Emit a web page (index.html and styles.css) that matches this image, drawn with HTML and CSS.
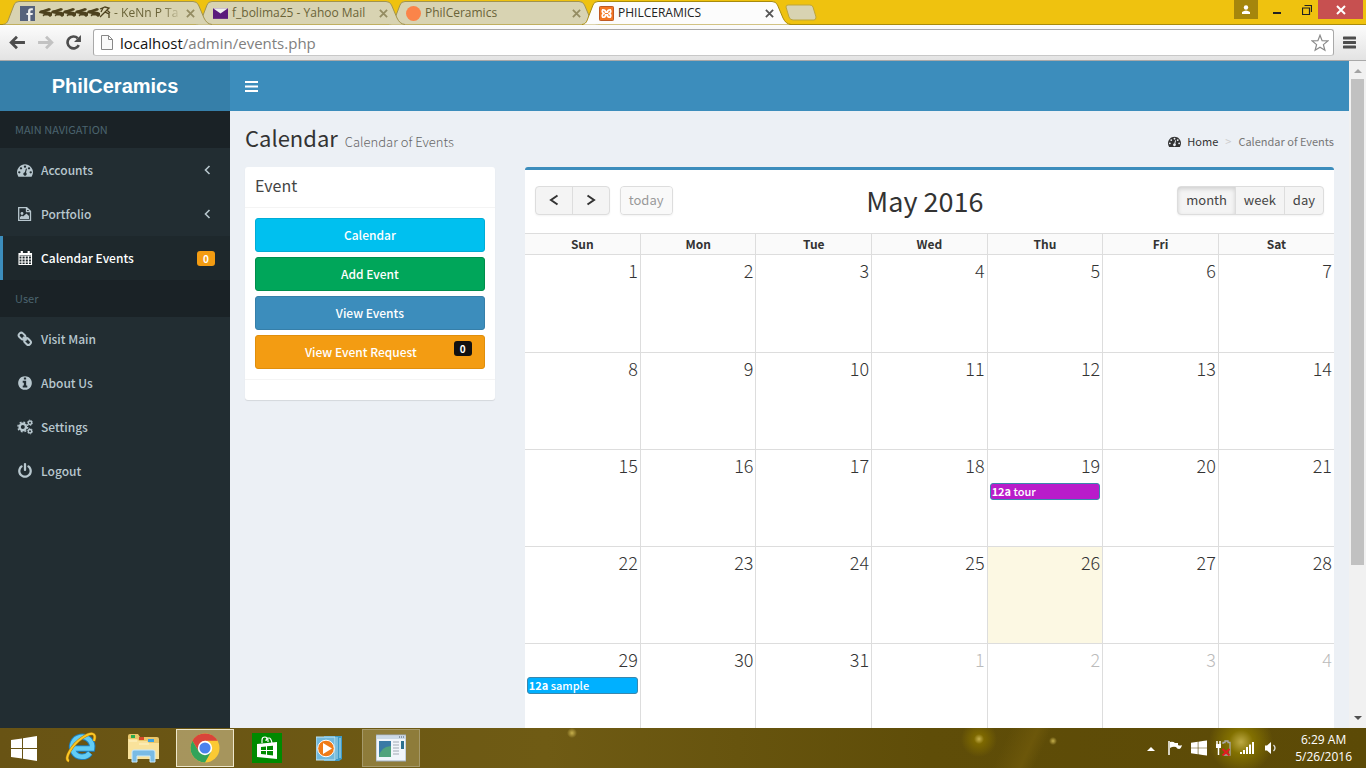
FILE: index.html
```html
<!DOCTYPE html>
<html lang="en">
<head>
<meta charset="utf-8">
<title>PHILCERAMICS</title>
<link rel="stylesheet" href="styles.css">
</head>
<body>
<svg class="defs" aria-hidden="true">
  <symbol id="tab-shape" viewBox="0 0 209 25" preserveAspectRatio="none"><path d="M0 24.5C4 24 5 21 6 18L11 5Q12 1.500 16 1.500H190Q194 1.500 195.500 5L201 18C203 22 205 24 209 24.500"/></symbol>
  <symbol id="x" viewBox="0 0 10 10"><path d="M1 1l8 8M9 1L1 9" stroke="currentColor" stroke-width="2" fill="none"/></symbol>
  <symbol id="dash" viewBox="0 0 1792 1792"><path d="M384 1152q0-53-37.500-90.500t-90.500-37.500-90.500 37.500-37.500 90.500 37.500 90.500 90.500 37.500 90.500-37.500 37.500-90.500zm192-448q0-53-37.500-90.500t-90.500-37.500-90.500 37.500-37.500 90.500 37.500 90.500 90.500 37.500 90.500-37.500 37.500-90.500zm428 481l101-382q6-26-7.500-48.500t-38.500-29.500-48 6.500-30 39.500l-101 382q-60 5-107 43.500t-63 98.500q-20 77 20 146t117 89 146-20 89-117q16-60-6-117t-72-91zm660-33q0-53-37.500-90.500t-90.500-37.500-90.500 37.500-37.500 90.500 37.500 90.500 90.500 37.500 90.500-37.500 37.500-90.500zm-640-640q0-53-37.500-90.500t-90.500-37.500-90.500 37.500-37.500 90.500 37.500 90.500 90.500 37.500 90.500-37.500 37.500-90.500zm448 192q0-53-37.500-90.500t-90.500-37.500-90.500 37.500-37.500 90.500 37.500 90.500 90.500 37.500 90.500-37.500 37.500-90.500zm320 448q0 261-141 483-19 29-54 29h-1402q-35 0-54-29-141-221-141-483 0-182 71-348t191-286 286-191 348-71 348 71 286 191 191 286 71 348z"/></symbol>
  <symbol id="left" viewBox="0 0 8 10"><path d="M6.500 1L2.500 5l4 4" stroke="currentColor" stroke-width="1.600" fill="none"/></symbol>
  <symbol id="flag4" viewBox="0 0 26 25"><path fill="#fff" d="M0 4l11-1.500V12H0zM12 2.300L26 0v12H12zM0 13h11v9.500L0 21zM12 13h14v12l-14-2.300z"/></symbol>
</svg>

<header class="tabstrip">
  <nav class="tabs" aria-label="Browser tabs">
    <div class="tab tab-1">
      <svg class="tab-bg"><use href="#tab-shape"/></svg>
      <svg class="fav" viewBox="0 0 14 14"><path fill="#56627c" d="M0 0h14v14H0z"/><path fill="#eee" d="M7.500 14V8.500H6v-2h1.500V5Q7.500 2 10.500 2H12v2h-1.200Q9.700 4 9.700 5v1.500H12l-.3 2h-2V14z"/></svg>
      <span class="tab-title fade"><svg class="arms" viewBox="0 0 72 14"><g fill="#4d411d"><path id="arm" d="M0 8Q0 5 4 5L10 3l2 1-1 1.500-4 1Q11 6 13 8v2.500l-2 1.500-2-1.500H5.500l-1 1-1-1.500L5 9z"/><use href="#arm" x="12"/><use href="#arm" x="24"/><use href="#arm" x="36"/><use href="#arm" x="48"/></g><path d="M61 4l5-2 4 1-4 4 4 2v4M66 7l-5 5M64 3l-2 4M68 5l3 3" fill="none" stroke="#4d411d" stroke-width="1.300"/></svg> - KeNn P Ta</span>
      <button class="tab-close" aria-label="Close tab"><svg><use href="#x"/></svg></button>
    </div>
    <div class="tab tab-2">
      <svg class="tab-bg"><use href="#tab-shape"/></svg>
      <svg class="fav" viewBox="0 0 14 14"><path fill="#5b1a7c" d="M0 2h14v10H0z"/><path fill="#eee" d="M0 2h14L7 7z"/></svg>
      <span class="tab-title">f_bolima25 - Yahoo Mail</span>
      <button class="tab-close" aria-label="Close tab"><svg><use href="#x"/></svg></button>
    </div>
    <div class="tab tab-3">
      <svg class="tab-bg"><use href="#tab-shape"/></svg>
      <svg class="fav" viewBox="0 0 14 14"><circle cx="7" cy="7" r="7" fill="#fb8449"/></svg>
      <span class="tab-title">PhilCeramics</span>
      <button class="tab-close" aria-label="Close tab"><svg><use href="#x"/></svg></button>
    </div>
    <div class="tab tab-4 active">
      <svg class="tab-bg"><use href="#tab-shape"/></svg>
      <svg class="fav" viewBox="0 0 16 16"><rect x=".5" y=".5" width="15" height="15" rx="1" fill="#f37623" stroke="#b9501a"/><path d="M4 4q3 0 3 2.500h2Q9 4 12 4q1.500 2.500-1 4 2.500 1.500 1 4-3 0-3-2.500H7Q7 12 4 12q-1.500-2.500 1-4-2.500-1.500-1-4z" fill="none" stroke="#fff" stroke-width="1.800"/></svg>
      <span class="tab-title">PHILCERAMICS</span>
      <button class="tab-close" aria-label="Close tab"><svg><use href="#x"/></svg></button>
    </div>
    <button class="new-tab" aria-label="New tab"><svg viewBox="0 0 32 17"><path d="M3 1h22q2 0 3 2l3 10q0 3-2 3H8q-3 0-4-3L1 3q0-2 2-2z" fill="#d8d3b2" stroke="#bca53c"/></svg></button>
  </nav>
  <div class="window-buttons">
    <button class="win user" aria-label="User"><svg viewBox="0 0 10 10"><circle cx="5" cy="2.500" r="2.200" fill="#fff"/><path fill="#fff" d="M1 9V7q4-3 8 0v2z"/></svg></button>
    <button class="win min" aria-label="Minimize"><svg viewBox="0 0 10 10"><path d="M1 8h8" stroke="#222" stroke-width="2"/></svg></button>
    <button class="win" aria-label="Restore"><svg viewBox="0 0 10 10"><path d="M.5 3h7v6.500h-7zM2.500 .5h7V7" fill="none" stroke="#222" stroke-width="1.200"/></svg></button>
    <button class="win close" aria-label="Close"><svg><use href="#x"/></svg></button>
  </div>
</header>

<div class="toolbar">
  <button class="nav" aria-label="Back"><svg viewBox="0 0 16 14"><path d="M15 7H2M7.500 1.500L2 7l5.500 5.500" fill="none" stroke="#4d4d4d" stroke-width="2.600"/></svg></button>
  <button class="nav" aria-label="Forward"><svg viewBox="0 0 16 14"><path d="M1 7h13M8.500 1.500L14 7l-5.500 5.500" fill="none" stroke="#c2c2c2" stroke-width="2.600"/></svg></button>
  <button class="nav" aria-label="Reload"><svg viewBox="0 0 16 14"><path d="M13 9.500A5.600 5.600 0 1 1 12 3" fill="none" stroke="#4d4d4d" stroke-width="2.500"/><path d="M15 0v6.500H8.500z" fill="#4d4d4d"/></svg></button>
  <div class="address">
    <svg class="doc" viewBox="0 0 12 15"><path d="M.5 .5h7l4 4v10H.5zM7.500 .5v4h4" fill="#fafafa" stroke="#888"/></svg>
    <span class="url"><b>localhost</b>/admin/events.php</span>
    <svg class="star" viewBox="0 0 18 18"><path d="M9 1.200l2.100 5.400 5.800.3-4.500 3.700 1.500 5.700L9 13.200l-4.900 3.100 1.500-5.700L1.100 6.900l5.800-.3z" fill="none" stroke="#8a8a8a" stroke-width="1.200"/></svg>
  </div>
  <button class="menu" aria-label="Menu"><svg viewBox="0 0 13 13"><path d="M1 2h11M1 6.500h11M1 11h11" stroke="#4d4d4d" stroke-width="3" stroke-linecap="round"/></svg></button>
</div>

<div class="viewport">
  <aside class="sidebar">
    <a class="brand" href="#">PhilCeramics</a>
    <h2 class="side-head">MAIN NAVIGATION</h2>
    <a class="side-item" href="#"><svg><use href="#dash"/></svg><span>Accounts</span><svg class="chev"><use href="#left"/></svg></a>
    <a class="side-item" href="#"><svg viewBox="0 0 16 16"><path d="M1.700 1.700h8l3.800 3.600v9H1.700zM9.500 1.700v4h4" fill="none" stroke="currentColor" stroke-width="1.300"/><circle cx="5" cy="7.500" r="1.400"/><path d="M3 13v-2l2-1.500 1 1 3.500-3L12 10v3z"/></svg><span>Portfolio</span><svg class="chev"><use href="#left"/></svg></a>
    <a class="side-item current" href="#"><svg viewBox="0 0 16 16"><path d="M2 3.500h12.500v11H2zM2 6h12.500M2 9h12.500M2 12h12.500M5 6v8.500M8.200 6v8.500M11.400 6v8.500M2 4.500h12.500" fill="none" stroke="currentColor" stroke-width="1.100"/><path d="M3.700 1h2.200v4H3.700zM10.600 1h2.200v4h-2.200z"/></svg><span>Calendar Events</span><small class="badge orange">0</small></a>
    <h2 class="side-head">User</h2>
    <a class="side-item" href="#"><svg viewBox="0 0 16 16"><g fill="none" stroke="currentColor" stroke-width="2"><rect x="-3.500" y="-2.500" width="7" height="5" rx="2.300" transform="translate(5 5) rotate(45)"/><rect x="-3.500" y="-2.500" width="7" height="5" rx="2.300" transform="translate(10.600 10.600) rotate(45)"/><path d="M6 6l3.500 3.500"/></g></svg><span>Visit Main</span></a>
    <a class="side-item" href="#"><svg viewBox="0 0 1792 1792"><path d="M1152 1376v-160q0-14-9-23t-23-9h-96v-512q0-14-9-23t-23-9h-320q-14 0-23 9t-9 23v160q0 14 9 23t23 9h96v320h-96q-14 0-23 9t-9 23v160q0 14 9 23t23 9h448q14 0 23-9t9-23zm-128-896v-160q0-14-9-23t-23-9h-192q-14 0-23 9t-9 23v160q0 14 9 23t23 9h192q14 0 23-9t9-23zm640 416q0 209-103 385.500t-279.500 279.500-385.500 103-385.500-103-279.500-279.500-103-385.500 103-385.500 279.500-279.500 385.500-103 385.500 103 279.500 279.500 103 385.500z"/></svg><span>About Us</span></a>
    <a class="side-item" href="#"><svg viewBox="0 0 16 16"><g fill="none" stroke="currentColor"><circle cx="5.800" cy="8" r="3.200" stroke-width="2.400"/><circle cx="5.800" cy="8" r="4.900" stroke-width="1.400" stroke-dasharray="1.900 1.950"/><circle cx="13" cy="3.800" r="1.700" stroke-width="1.500"/><circle cx="13" cy="3.800" r="2.700" stroke-width=".8" stroke-dasharray="1.400 1.400"/><circle cx="13" cy="12.200" r="1.700" stroke-width="1.500"/><circle cx="13" cy="12.200" r="2.700" stroke-width=".8" stroke-dasharray="1.400 1.400"/></g></svg><span>Settings</span></a>
    <a class="side-item" href="#"><svg viewBox="0 0 1792 1792"><path d="M1664 896q0 156-61 298t-164 245-245 164-298 61-298-61-245-164-164-245-61-298q0-182 80.500-343t226.500-270q43-32 95.500-25t83.500 50q32 42 24.500 94.500t-49.500 84.500q-98 74-151.500 181t-53.500 228q0 104 40.500 198.500t109.500 163.500 163.500 109.500 198.500 40.500 198.500-40.500 163.500-109.500 109.500-163.500 40.500-198.500q0-121-53.500-228t-151.500-181q-42-32-49.500-84.500t24.500-94.500q31-43 84-50t95 25q146 109 226.500 270t80.500 343zm-640-768v640q0 52-38 90t-90 38-90-38-38-90v-640q0-52 38-90t90-38 90 38 38 90z"/></svg><span>Logout</span></a>
  </aside>

  <main class="main">
    <div class="topbar"><button class="toggle" aria-label="Toggle navigation"><svg viewBox="0 0 13 11"><path d="M0 1h13M0 5.500h13M0 10h13" stroke="#fff" stroke-width="2"/></svg></button></div>
    <div class="page-head">
      <h1>Calendar <small>Calendar of Events</small></h1>
      <nav class="crumbs"><a href="#"><svg><use href="#dash"/></svg>Home</a><i>&gt;</i><span>Calendar of Events</span></nav>
    </div>
    <div class="row">
      <div class="col-side">
        <section class="card">
          <h3>Event</h3>
          <div class="actions">
            <button class="btn cyan">Calendar</button>
            <button class="btn green">Add Event</button>
            <button class="btn blue">View Events</button>
            <button class="btn amber">View Event Request<small class="badge black">0</small></button>
          </div>
          <div class="card-foot"></div>
        </section>
      </div>
      <div class="col-main">
        <section class="calendar">
          <div class="cal-bar">
            <div class="cal-left">
              <div class="group"><button aria-label="Previous"><svg viewBox="0 0 10 12"><path d="M8.500 1.500L2 6l6.500 4.500" fill="none" stroke="#333" stroke-width="2"/></svg></button><button aria-label="Next"><svg viewBox="0 0 10 12"><path d="M1.500 1.500L8 6l-6.500 4.500" fill="none" stroke="#333" stroke-width="2"/></svg></button></div>
              <div class="group"><button disabled>today</button></div>
            </div>
            <h2>May 2016</h2>
            <div class="group"><button class="on">month</button><button>week</button><button>day</button></div>
          </div>
          <table>
            <thead><tr><th>Sun</th><th>Mon</th><th>Tue</th><th>Wed</th><th>Thu</th><th>Fri</th><th>Sat</th></tr></thead>
            <tbody>
              <tr><td>1</td><td>2</td><td>3</td><td>4</td><td>5</td><td>6</td><td>7</td></tr>
              <tr><td>8</td><td>9</td><td>10</td><td>11</td><td>12</td><td>13</td><td>14</td></tr>
              <tr><td>15</td><td>16</td><td>17</td><td>18</td><td>19<a class="event purple" href="#"><b>12a</b> tour</a></td><td>20</td><td>21</td></tr>
              <tr><td>22</td><td>23</td><td>24</td><td>25</td><td class="today">26</td><td>27</td><td>28</td></tr>
              <tr><td>29<a class="event sky" href="#"><b>12a</b> sample</a></td><td>30</td><td>31</td><td class="other">1</td><td class="other">2</td><td class="other">3</td><td class="other">4</td></tr>
            </tbody>
          </table>
        </section>
      </div>
    </div>
  </main>

  <div class="scrollbar">
    <svg viewBox="0 0 8 5"><path d="M0 5l4-4 4 4z" fill="#a3a3a3"/></svg>
    <div class="track"><div class="thumb"></div></div>
    <svg viewBox="0 0 8 5"><path d="M0 0l4 4 4-4z" fill="#505050"/></svg>
  </div>
</div>

<footer class="taskbar">
  <button class="task start" aria-label="Start"><svg class="i26" viewBox="0 0 26 25"><use href="#flag4"/></svg></button>
  <button class="task" aria-label="Internet Explorer"><svg class="i32" viewBox="0 0 32 32"><path d="M25 21A10 10 0 1 1 27 16.500H9" fill="none" stroke="#1e7fc0" stroke-width="6.500"/><path d="M25 21A10 10 0 1 1 27 16.500H9" fill="none" stroke="#62cdf5" stroke-width="4.500"/><path d="M4 29C-2 27 8 12 17 6S32 0 29 9" fill="none" stroke="#b87d09" stroke-width="3"/><path d="M4 29C-2 27 8 12 17 6S32 0 29 9" fill="none" stroke="#fbc927" stroke-width="2"/></svg></button>
  <button class="task" aria-label="File Explorer"><svg class="i32" viewBox="0 0 32 32"><path d="M1 4q0-2 2-2h8l2 3h17q2 0 2 2v20H1z" fill="#e9c66a"/><path d="M4 3h4v3H4z" fill="#2cab4e"/><path d="M12 5h5v3h-5z" fill="#d7492b"/><path d="M21 7h6v3h-6z" fill="#3aa3e3"/><path d="M1 7h9l2 2h8l2 2h10v16H1z" fill="#f9e29b"/><path d="M2 9h8M12 12h10" stroke="#fff4c8"/><path d="M5 30V20q0-2 2-2h19q2 0 2 2v10h-5v-6H10v6z" fill="#79bbe4" stroke="#c9e9fa"/></svg></button>
  <button class="task open focus" aria-label="Chrome"><svg class="i30" viewBox="0 0 30 30"><circle cx="15" cy="15" r="14.500" fill="#fbc934"/><path d="M2.400 7.800A14.500 14.500 0 0 1 27.600 7.800H15L8.800 18.500z" fill="#d9453a"/><path d="M2.400 7.800A14.500 14.500 0 0 0 15 29.500L21.200 18.600 15 22 8.800 18.600z" fill="#32a35a"/><circle cx="15" cy="15" r="7.200" fill="#fff"/><circle cx="15" cy="15" r="5.600" fill="#4a82ee"/></svg></button>
  <button class="task" aria-label="Store"><svg class="i30" viewBox="0 0 30 30"><path d="M0 0h30v30H0z" fill="#008a00"/><path d="M10 10V7q0-3 3-3 2 0 3 3v2M14 8q0-3 3-3 2 0 3 5" fill="none" stroke="#fff" stroke-width="1.200"/><path d="M5 11l20-2v17L5 24z" fill="#fff"/><path d="M9 14l5-.5V17H9zM15 13.300l6-.6V17h-6zM9 18h5v3.500l-5-.5zM15 18h6v4.500l-6-.8z" fill="#008a00"/></svg></button>
  <button class="task" aria-label="Media Player"><svg class="i26" viewBox="0 0 26 25"><path d="M8 0h18v23l-3 2H8z" fill="#3f9bc7"/><path d="M0 1h19v23H0z" fill="#72b9dc" stroke="#c3e5f3"/><path d="M21 1v22M24 2v20" stroke="#b7e1f3"/><circle cx="10" cy="12.500" r="8.300" fill="#f07b17" stroke="#fff"/><path d="M7 7l9 5.500L7 18z" fill="#fff"/></svg></button>
  <button class="task open" aria-label="Application"><svg class="i30" viewBox="0 0 30 26"><path d="M0 0h30v26H0z" fill="#f1f5fa" stroke="#9bacc0"/><path d="M1 1h28v3H1z" fill="#cbd9e7"/><path d="M23 2h1M25 2h1M27 2h1" stroke="#456"/><path d="M3 6h12v16H3z" fill="#3a7aa5"/><path d="M3 22q1-10 12-11v11z" fill="#51a37c"/><path d="M17 7h6M17 10h6M17 13h6M17 16h6M17 19h6" stroke="#a0a9b3"/><path d="M25 6h3v8h-3z" fill="#2c6f8e"/></svg></button>
  <div class="tray">
    <svg class="up" viewBox="0 0 8 5"><path d="M0 5l4-4 4 4z" fill="#fff"/></svg>
    <svg viewBox="0 0 16 16"><path d="M2 1v14" stroke="#fff" stroke-width="1.500"/><path d="M3 2q3-1 5 1h3v2q2 1 4 0-1 4-3 4-2 0-3-2-3-1-6 1z" fill="#fff"/></svg>
    <svg viewBox="0 0 26 25"><use href="#flag4"/></svg>
    <svg viewBox="0 0 16 16"><path d="M2 1v4M5 1v4M3.500 8v7" stroke="#fff" stroke-width="1.500"/><path d="M1 4h5v4H1z" fill="#fff"/><path d="M8 4V2.500h2V1h3v1.500h2V15H8" fill="none" stroke="#aaa" stroke-width="1.300"/><path d="M7.500 9l7 6.500M14.500 9l-7 6.500" stroke="#e21b22" stroke-width="2"/></svg>
    <svg viewBox="0 0 16 16"><path d="M1 14v-2h2v2zM4 14v-4h2v4zM7 14V7h2v7zM10 14V4.500h2V14zM13 14V2h2v12z" fill="#fff"/></svg>
    <svg viewBox="0 0 16 16"><path d="M2 5.500h2L8 2v12L4 10.500H2z" fill="#fff"/><path d="M10.500 5q3 3 0 6" fill="none" stroke="#ddd" stroke-width="1.300"/></svg>
    <time>6:29 AM<br>5/26/2016</time>
  </div>
</footer>
</body>
</html>
```
FILE: styles.css
```css
* { box-sizing: border-box; }
body {
  margin: 0;
  height: 100vh;
  display: flex;
  flex-direction: column;
  overflow: hidden;
  font: 13px/20px "Noto Sans CJK SC", sans-serif;
  color: #333;
}
button { font: inherit; color: inherit; margin: 0; padding: 0; border: 0; background: none; }
a { color: inherit; text-decoration: none; }
h1, h2, h3 { margin: 0; font-weight: 400; }
svg { display: block; flex: none; fill: currentColor; }
.defs { width: 0; height: 0; position: absolute; }

/* Browser tabs */
.tabstrip { display: flex; justify-content: space-between; height: 25px; flex: none; background: #efc20f; box-shadow: inset 0 -1px #a98b0c; }
.tabs { display: flex; padding-left: 3px; isolation: isolate; }
.tab { position: relative; display: flex; align-items: center; width: 209px; height: 25px; margin-right: -16px; padding: 1px 17px 0 17px; font: 12px/16px "Open Sans", sans-serif; color: #6a6338; }
.tab-1 { z-index: 4; }
.tab-2 { z-index: 3; }
.tab-3 { z-index: 2; }
.tab-4 { z-index: 5; }
.tab-bg { position: absolute; inset: 0; width: 100%; height: 100%; z-index: -1; fill: #d8d3b2; stroke: #a1934f; }
.active { color: #222; }
.active .tab-bg { fill: #fcfcfc; stroke: #a98b0c; }
.fav { width: 15px; height: 15px; }
.tab-title { flex: 1; display: flex; white-space: pre; overflow: hidden; padding-left: 4px; }
.fade { -webkit-mask-image: linear-gradient(90deg, #000 85%, transparent 97%); mask-image: linear-gradient(90deg, #000 85%, transparent 97%); }
.arms { width: 72px; height: 14px; }
.tab-close svg { width: 9px; height: 9px; }
.tab-close { color: #948c62; }
.active .tab-close { color: #555; }
.new-tab { align-self: flex-start; padding: 4px 0 0 10px; }
.new-tab svg { width: 32px; height: 17px; }
.window-buttons { display: flex; padding-right: 3px; height: 19px; }
.win { display: flex; align-items: center; justify-content: center; width: 22px; }
.win svg { width: 10px; height: 10px; }
.user { width: 24px; background: #a5860c; }
.min { width: 38px; }
.close { width: 45px; color: #fff; background: #c75050; }

/* Address bar */
.toolbar { display: flex; align-items: center; gap: 11px; height: 36px; flex: none; padding: 0 10px 0 9px; background: linear-gradient(#fcfcfc, #e3e3e3); border-bottom: 1px solid #a9a9a9; }
.nav svg { width: 17px; height: 15px; }
.address { flex: 1; display: flex; align-items: center; height: 27px; margin-right: -2px; padding: 0 4px 0 7px; background: #fff; border: 1px solid #a9a9a9; border-bottom-color: #c8c8c8; border-radius: 3px; }
.doc { width: 12px; height: 15px; }
.url { flex: 1; padding-left: 7px; font: 15px/22px "Open Sans", sans-serif; color: #808080; }
.url b { font-weight: 400; color: #111; }
.star { width: 18px; height: 18px; }
.menu svg { width: 13px; height: 13px; }

/* Application shell */
.viewport { flex: 1; min-height: 0; display: flex; overflow: hidden; }
.sidebar { width: 230px; flex: none; background: #222d32; color: #b8c7ce; }
.brand { display: block; background: #367fa9; color: #fff; text-align: center; font: bold 20px/50px "Liberation Sans", Arial, sans-serif; }
.side-head { padding: 8px 15px 9px; background: #1a2226; color: #4b646f; font-size: 11px; line-height: 20px; }
.side-item { display: flex; align-items: center; height: 44px; padding: 0 15px 0 14px; border-left: 3px solid transparent; font-size: 12px; font-weight: 500; }
.side-item svg { width: 16px; height: 16px; }
.side-item span { flex: 1; padding-left: 8px; }
.side-item .chev { width: 8px; height: 10px; margin-right: 4px; }
.current { background: #1e282c; border-left-color: #3c8dbc; color: #fff; }
.badge { border-radius: 3px; color: #fff; font-size: 10px; line-height: 15px; font-weight: 700; padding: 0 6px; }
.orange { background: #f39c12; }
.black { background: #111; }

.main { flex: 1; min-width: 0; background: #ecf0f5; }
.topbar { height: 50px; background: #3c8dbc; }
.toggle { height: 50px; padding: 0 15px; }
.toggle svg { width: 13px; height: 11px; }
.page-head { display: flex; justify-content: space-between; align-items: center; height: 56px; padding: 0 15px; }
.page-head h1 { font-size: 22px; line-height: 26px; }
.page-head h1 small { padding-left: 2px; font-size: 13px; font-weight: 300; color: #666; }
.crumbs { display: flex; align-items: center; font-size: 11px; padding-top: 4px; color: #777; }
.crumbs a { display: flex; align-items: center; gap: 6px; color: #333; }
.crumbs svg { width: 13px; height: 13px; }
.crumbs i { padding: 0 7px; font-style: normal; color: #ccc; }
.row { display: flex; }
.col-side { width: 25%; padding: 0 15px; }
.col-main { width: 75%; padding: 0 15px; }
.card { background: #fff; border-radius: 3px; box-shadow: 0 1px 1px rgba(0,0,0,.1); }
.card h3 { padding: 8px 10px 12px; font-size: 16px; line-height: 20px; color: #444; border-bottom: 1px solid #f4f4f4; }
.actions { display: flex; flex-direction: column; gap: 5px; padding: 10px; }
.btn { position: relative; height: 34px; border: 1px solid; border-radius: 3px; color: #fff; font-size: 12px; font-weight: 500; }
.btn .badge { position: absolute; top: 5px; right: 12px; }
.cyan { background: #00c0ef; border-color: #00acd6; }
.green { background: #00a65a; border-color: #008d4c; }
.blue { background: #3c8dbc; border-color: #367fa9; }
.amber { padding-right: 18px; background: #f39c12; border-color: #e08e0b; }
.card-foot { height: 21px; border-top: 1px solid #f4f4f4; }

/* Month calendar */
.calendar { background: #fff; border-top: 3px solid #3c8dbc; border-radius: 3px 3px 0 0; }
.cal-bar { display: flex; justify-content: space-between; align-items: center; height: 63px; padding: 0 10px 3px; }
.cal-bar h2 { font-size: 27px; line-height: 33px; }
.cal-left { display: flex; gap: 10px; }
.group { display: flex; height: 29px; border: 1px solid #ddd; border-radius: 4px; background: #f4f4f4; overflow: hidden; color: #444; box-shadow: 0 1px 2px rgba(0,0,0,.05); }
.group button { padding: 0 8px; }
.group button + button { border-left: 1px solid #ddd; }
.group svg { width: 10px; height: 12px; margin: 0 5px; }
.group button:disabled { color: #999; background: #f9f9f9; }
.group .on { box-shadow: inset 0 2px 4px rgba(0,0,0,.15); }
table { width: 100%; table-layout: fixed; border-collapse: collapse; }
th { height: 21px; padding: 0; line-height: 20px; font-size: 12px; border: 1px solid #ddd; background: #fafafa; }
td { height: 97px; padding: 4px 2px 0; border: 1px solid #ddd; vertical-align: top; text-align: right; font-size: 18px; line-height: 22px; font-weight: 300; }
tbody tr:first-child td { height: 98px; }
tr > :first-child { border-left: 0; }
tr > :last-child { border-right: 0; }
.today { background: #fcf8e3; }
.other { color: #bbb; }
.event { display: block; height: 17px; margin-top: 7px; padding-left: 1px; border: 1px solid #3a87ad; border-radius: 3px; color: #fff; text-align: left; font-size: 11px; line-height: 15px; font-weight: 500; }
.purple { background: #b91cca; }
.sky { background: #00b0ff; }

.scrollbar { width: 17px; flex: none; display: flex; flex-direction: column; align-items: center; gap: 6px; padding: 7px 0; background: #f1f1f1; }
.scrollbar svg { width: 8px; height: 5px; }
.track { flex: 1; width: 13px; }
.thumb { height: 77%; background: #c1c1c1; }

/* Taskbar */
.taskbar {
  display: flex; gap: 4px; height: 40px; flex: none;
  background:
    radial-gradient(circle at 1241px 14px, #bca944 0, #827000 12px, transparent 32px),
    radial-gradient(circle at 979px 11px, #c6b04c 0, #7d6800 5px, transparent 18px),
    radial-gradient(circle at 1053px 13px, #c6b04c 0, transparent 4px),
    radial-gradient(circle at 572px 5px, #c6b04c 0, transparent 5px),
    linear-gradient(115deg, transparent 73%, #6c570a 75%, transparent 76%),
    linear-gradient(90deg, #685314, #6f5b14 40%, #5f4d08 68%, #5c4a06);
}
.task { display: flex; align-items: center; justify-content: center; width: 58px; height: 38px; margin-top: 1px; }
.start { width: 48px; }
.i26 { width: 26px; height: 25px; }
.i30 { width: 30px; height: 30px; }
.i32 { width: 32px; height: 32px; }
.open { background: rgba(220,205,150,.3); border: 1px solid #a5996a; }
.focus { background: rgba(225,212,165,.5); border-color: #eee7cc; }
.tray { margin-left: auto; display: flex; align-items: center; gap: 8px; padding-right: 14px; color: #fff; }
.tray svg { width: 16px; height: 16px; }
.tray .up { width: 8px; height: 5px; margin-right: 4px; }
.tray time { padding-left: 8px; text-align: center; font: 12px/17px "Open Sans", sans-serif; }
```
